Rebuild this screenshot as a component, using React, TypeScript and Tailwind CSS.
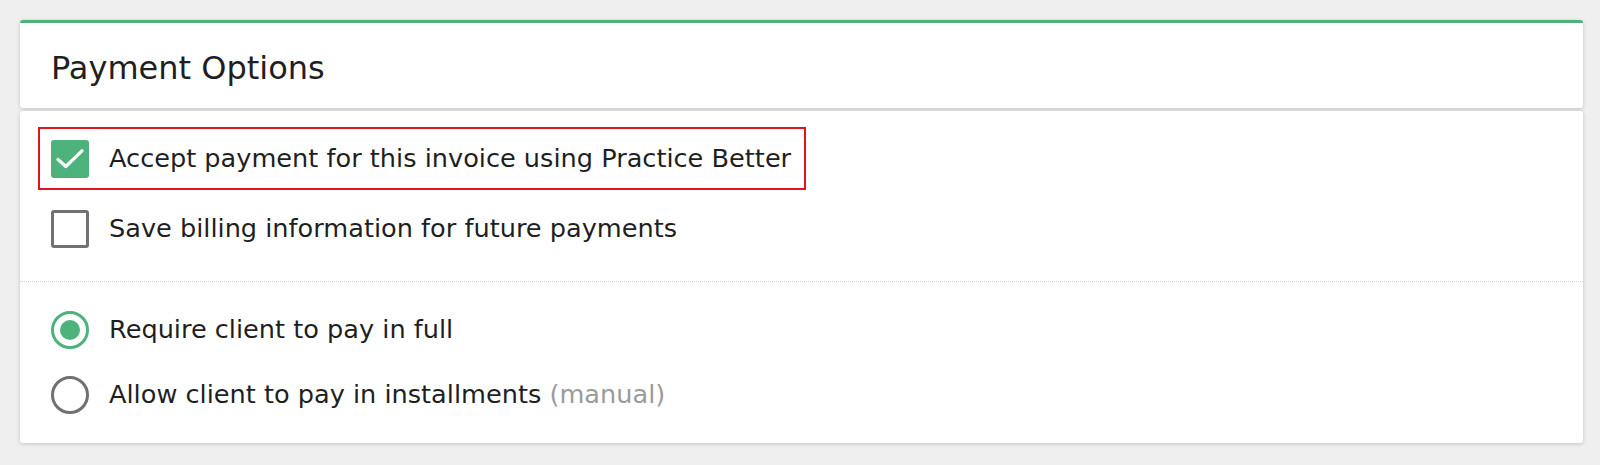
import React from "react";

function CheckedBox() {
  return (
    <div className="w-[38px] h-[38px] rounded-[3px] bg-[#4db27b] flex items-center justify-center shrink-0">
      <svg width="38" height="38" viewBox="0 0 38 38" fill="none">
        <path d="M7 19.5 L14.8 26.5 L31 10.8" stroke="white" strokeWidth="3.2" strokeLinecap="round" strokeLinejoin="round" />
      </svg>
    </div>
  );
}

function EmptyBox() {
  return <div className="w-[38px] h-[38px] rounded-[3px] border-[3px] border-[#717171] bg-white shrink-0" />;
}

function RadioOn() {
  return (
    <div className="w-[38px] h-[38px] rounded-full border-[3px] border-[#4db27b] flex items-center justify-center shrink-0">
      <div className="w-[20px] h-[20px] rounded-full bg-[#4db27b]" />
    </div>
  );
}

function RadioOff() {
  return <div className="w-[38px] h-[38px] rounded-full border-[3px] border-[#717171] shrink-0" />;
}

export default function App() {
  const font = { fontFamily: '"DejaVu Sans", "Noto Sans", sans-serif' };
  return (
    <div className="w-[1600px] h-[465px] bg-[#efefef] pt-[20px] pl-[20px] pr-[17px]" style={font}>
      <div className="bg-white border-t-[3px] border-[#4db27b] rounded-[3px] h-[88px] flex items-center pl-[31px] pt-[4px] shadow-[0_1px_4px_rgba(0,0,0,0.18)]">
        <span className="text-[32px] text-[#1f1f1f] leading-none">Payment Options</span>
      </div>
      <div className="mt-[3px] bg-white rounded-[3px] shadow-[0_1px_4px_rgba(0,0,0,0.18)] pt-[16px] pb-[29px]">
        <div className="pl-[18px]">
          <div className="inline-flex items-center border-2 border-[#e0141c] pl-[11px] pr-[13px] pt-[11px] pb-[10px]">
            <CheckedBox />
            <span className="ml-[20px] text-[25.6px] text-[#1f1f1f] leading-none">
              Accept payment for this invoice using Practice Better
            </span>
          </div>
        </div>
        <div className="pl-[31px] mt-[20px] flex items-center">
          <EmptyBox />
          <span className="ml-[20px] text-[25.6px] text-[#1f1f1f] leading-none">
            Save billing information for future payments
          </span>
        </div>
        <div className="mt-[33px] border-t border-dotted border-[#cfcfcf]" />
        <div className="pl-[31px] mt-[29px] flex items-center">
          <RadioOn />
          <span className="ml-[20px] text-[25.6px] text-[#1f1f1f] leading-none">Require client to pay in full</span>
        </div>
        <div className="pl-[31px] mt-[27px] flex items-center">
          <RadioOff />
          <span className="ml-[20px] text-[25.6px] text-[#1f1f1f] leading-none">
            Allow client to pay in installments <span className="text-[#9b9b9b]">(manual)</span>
          </span>
        </div>
      </div>
    </div>
  );
}
